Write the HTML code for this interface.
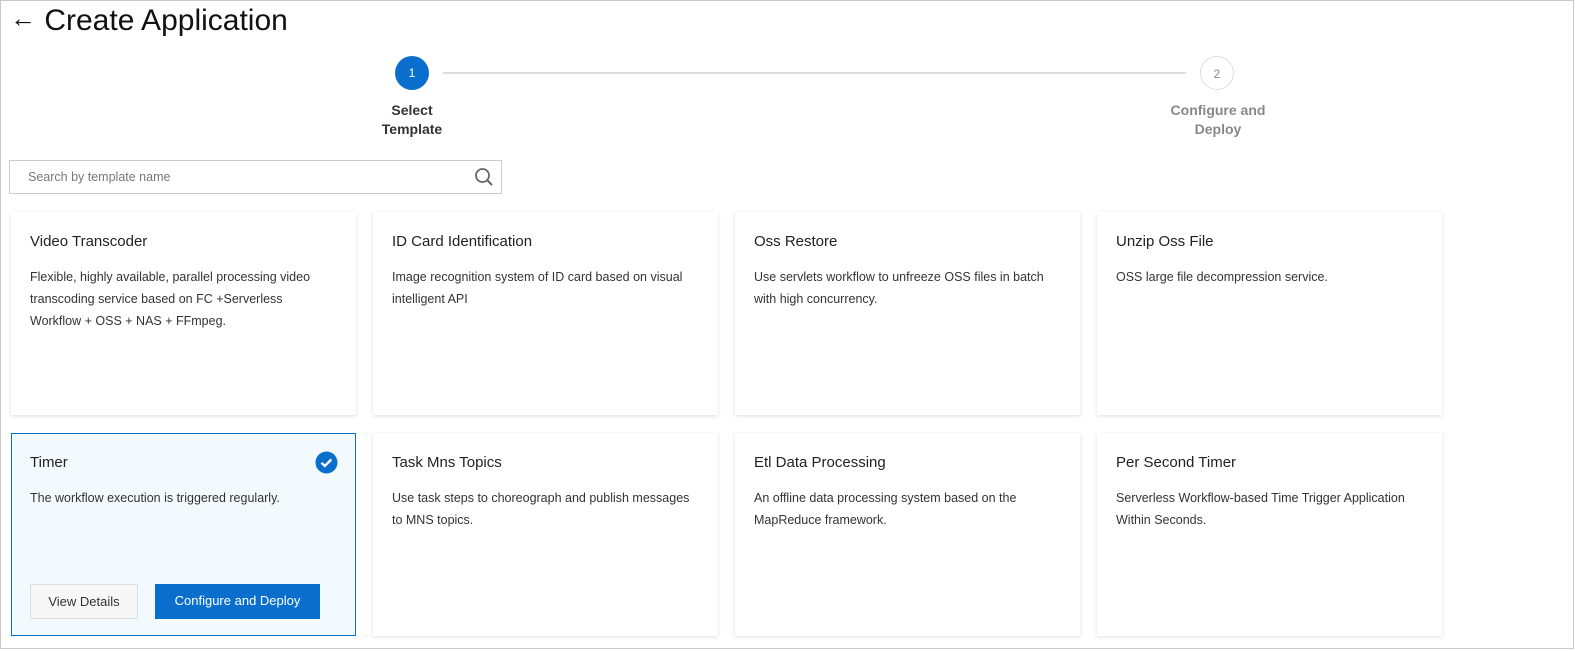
<!DOCTYPE html>
<html><head><style>
*{box-sizing:border-box;margin:0;padding:0}
body{width:1575px;height:651px;background:#fff;font-family:"Liberation Sans",sans-serif;color:#333;position:relative;overflow:hidden}
.frame{position:absolute;left:0;top:0;width:1574px;height:649px;border:1px solid #c8c8c8}
.title{position:absolute;left:10px;top:3px;font-size:30px;color:#111;line-height:36px}
.circle{position:absolute;width:34px;height:34px;border-radius:50%;text-align:center;line-height:34px;font-size:12px}
.line{position:absolute;left:443px;top:72px;width:743px;height:2px;background:#ddd}
.lbl{position:absolute;width:160px;text-align:center;font-weight:bold;font-size:14px;line-height:19px}
.search{position:absolute;left:9px;top:160px;width:493px;height:34px;border:1px solid #ccc;font-size:12.5px;color:#777;padding-left:18px;line-height:33px}
.card{position:absolute;width:345px;height:203px;background:#fff;box-shadow:0 1px 4px rgba(0,0,0,.13);padding:20px 19px}
.card h3{font-size:15px;font-weight:normal;color:#222;line-height:20px;margin-bottom:14px}
.card p{font-size:12.5px;line-height:22px;color:#333}
.sel{background:#f2fafd;border:1px solid #0a6fc9;box-shadow:none}
.btn{position:absolute;top:150px;height:35px;font-size:13px;text-align:center;line-height:34px}
</style></head><body>
<div class="frame"></div>
<div class="title"><span style="font-size:26px;position:relative;top:-3px">&#8592;</span> Create Application</div>
<div class="line"></div>
<div class="circle" style="left:395px;top:56px;background:#0a6fcc;color:#fff">1</div>
<div class="circle" style="left:1200px;top:56px;border:1px solid #ddd;color:#888;background:#fff">2</div>
<div class="lbl" style="left:332px;top:101px;color:#333">Select<br>Template</div>
<div class="lbl" style="left:1138px;top:101px;color:#888">Configure and<br>Deploy</div>
<div class="search">Search by template name
<svg style="position:absolute;right:7px;top:6px" width="20" height="20" viewBox="0 0 20 20"><circle cx="8.5" cy="8.5" r="6.5" fill="none" stroke="#666" stroke-width="1.8"/><path d="M13.5 13.5L18 18" stroke="#666" stroke-width="2"/></svg></div>

<div class="card" style="left:11px;top:212px"><h3>Video Transcoder</h3><p>Flexible, highly available, parallel processing video transcoding service based on FC +Serverless Workflow + OSS + NAS + FFmpeg.</p></div>
<div class="card" style="left:373px;top:212px"><h3>ID Card Identification</h3><p>Image recognition system of ID card based on visual intelligent API</p></div>
<div class="card" style="left:735px;top:212px"><h3>Oss Restore</h3><p>Use servlets workflow to unfreeze OSS files in batch with high concurrency.</p></div>
<div class="card" style="left:1097px;top:212px"><h3>Unzip Oss File</h3><p>OSS large file decompression service.</p></div>

<div class="card sel" style="left:11px;top:433px;padding:19px 18px"><h3>Timer</h3><p>The workflow execution is triggered regularly.</p>
<svg style="position:absolute;left:303px;top:17px" width="23" height="23" viewBox="0 0 23 23"><circle cx="11.5" cy="11.5" r="11" fill="#0a6fcc"/><path d="M6.5 11.8l3.3 3.2 6.5-6.5" fill="none" stroke="#fff" stroke-width="2.4"/></svg>
<div class="btn" style="left:18px;width:108px;background:#f7f7f7;border:1px solid #ddd;color:#333">View Details</div>
<div class="btn" style="left:143px;width:165px;background:#0a6fcc;color:#fff">Configure and Deploy</div></div>
<div class="card" style="left:373px;top:433px"><h3>Task Mns Topics</h3><p>Use task steps to choreograph and publish messages to MNS topics.</p></div>
<div class="card" style="left:735px;top:433px"><h3>Etl Data Processing</h3><p>An offline data processing system based on the MapReduce framework.</p></div>
<div class="card" style="left:1097px;top:433px"><h3>Per Second Timer</h3><p>Serverless Workflow-based Time Trigger Application Within Seconds.</p></div>
</body></html>
